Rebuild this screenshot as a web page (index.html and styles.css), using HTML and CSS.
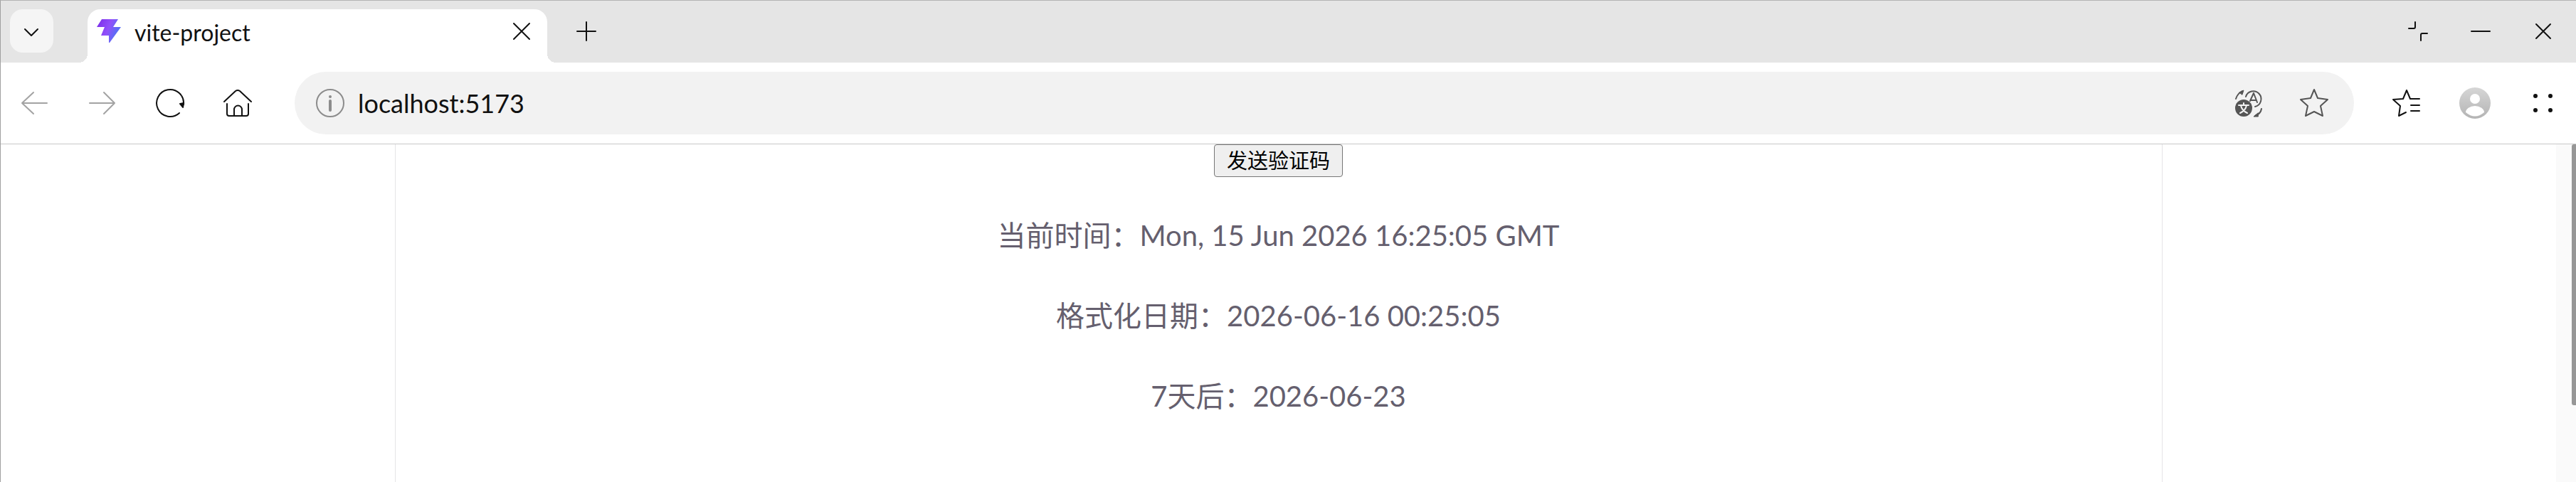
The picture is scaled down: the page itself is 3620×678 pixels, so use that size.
FILE: index.html
```
<!DOCTYPE html>
<html lang="zh-CN">
<head>
  <meta charset="utf-8">
  <title>vite-project</title>
  <link rel="stylesheet" href="styles.css">
</head>
<body>

<header class="tabs">
  <button class="tab-menu" aria-label="Tabs">
    <svg width="60" height="60" viewBox="0 0 60 60"><path d="M21 27l9 9 9-9"/></svg>
  </button>
  <div class="tab">
    <svg class="logo" width="36" height="36" viewBox="0 0 36 36">
      <defs>
        <linearGradient id="bolt" x1="0" y1="0" x2="1" y2="0.4">
          <stop offset="0" stop-color="#7a2be8"/>
          <stop offset="0.55" stop-color="#9150fa"/>
          <stop offset="0.9" stop-color="#5a6cf5"/>
        </linearGradient>
      </defs>
      <path d="M8 2H31L24 13H35L19 35H18V25H7L12 13H1Z"/>
    </svg>
    <span class="title">vite-project</span>
    <button class="icon" aria-label="Close tab">
      <svg width="28" height="28" viewBox="0 0 28 28"><path d="M3 3l22 22M25 3L3 25"/></svg>
    </button>
  </div>
  <button class="icon new-tab" aria-label="New tab">
    <svg width="30" height="30" viewBox="0 0 30 30"><path d="M15 2v26M2 15h26"/></svg>
  </button>
  <div class="window">
    <button class="icon" aria-label="Restore">
      <svg width="30" height="30" viewBox="0 0 30 30"><path d="M2 11h7q2 0 2-2V2M28 18h-7q-2 0-2 2v8"/></svg>
    </button>
    <button class="icon" aria-label="Minimize">
      <svg width="30" height="30" viewBox="0 0 30 30"><path d="M2 15h26"/></svg>
    </button>
    <button class="icon" aria-label="Close">
      <svg width="30" height="30" viewBox="0 0 30 30"><path d="M5 5l20 20M25 5L5 25"/></svg>
    </button>
  </div>
</header>

<nav class="toolbar">
  <button class="icon off" aria-label="Back">
    <svg width="42" height="42" viewBox="0 0 42 42"><path d="M38 21H3M19 6L3 21l16 15"/></svg>
  </button>
  <button class="icon off" aria-label="Forward">
    <svg width="42" height="42" viewBox="0 0 42 42"><path d="M3 21h35M23 6l15 15-15 15"/></svg>
  </button>
  <button class="icon" aria-label="Reload">
    <svg width="42" height="42" viewBox="0 0 42 42"><path d="M34 35A19 19 0 1 1 40 23"/><path d="M35 22l4 5 1-6z" fill="#111"/></svg>
  </button>
  <button class="icon" aria-label="Home">
    <svg width="42" height="42" viewBox="0 0 42 42"><path d="M2 19L18 4q3-2 6 0l16 15M6 22v14q0 3 3 3h24q3 0 3-3V22M16 39V30a5 5 0 0 1 11 0v9"/></svg>
  </button>
  <div class="address">
    <svg class="info" width="42" height="42" viewBox="0 0 42 42"><circle cx="21" cy="21" r="19"/><path d="M21 18v13" stroke-width="4"/><circle cx="21" cy="12" r="2" fill="#8c8c8c" stroke="none"/></svg>
    <input type="text" aria-label="Address" value="localhost:5173">
    <button class="icon grey" aria-label="Translate">
      <svg width="42" height="42" viewBox="0 0 42 42"><path d="M3 15Q5 8 12 4M17 12A11 11 0 1 1 30 26M39 29q-1 7-9 10"/><path d="M23 18l5-11 5 13M24 17h7"/><path d="M8 6l6-3-2 6zM34 35l-6 5 6 0z" fill="#555" stroke-width="1"/><circle cx="14" cy="28" r="12" fill="#555" stroke="none"/><path d="M7 24h14M14 21v3M9 35q8-4 9-11M19 35q-8-4-9-11" stroke="#f2f2f2"/></svg>
    </button>
    <button class="icon grey" aria-label="Favorite">
      <svg width="42" height="42" viewBox="0 0 42 42"><path d="M21 2l5 12 14 2-10 9 3 14-12-6-12 6 3-14L2 16l14-2z"/></svg>
    </button>
  </div>
  <button class="icon" aria-label="Favorites">
    <svg width="42" height="42" viewBox="0 0 42 42"><path d="M39 15H26L21 3l-5 12-14 1 10 9-2 14 10-5M27 24h12M27 32h12"/></svg>
  </button>
  <button class="icon" aria-label="Profile">
    <svg width="44" height="44" viewBox="0 0 44 44" class="avatar">
      <defs>
        <linearGradient id="grey" x1="0" y1="0" x2="0" y2="1">
          <stop offset="0" stop-color="#d6d6d6"/>
          <stop offset="1" stop-color="#b4b4b4"/>
        </linearGradient>
      </defs>
      <circle cx="22" cy="22" r="22" fill="url(#grey)"/>
      <circle cx="22" cy="16" r="7"/>
      <path d="M9 35a13 9 0 0 1 26 0q-13 11-26 0z"/>
    </svg>
  </button>
  <button class="icon" aria-label="Menu">
    <svg width="42" height="42" viewBox="0 0 42 42" class="dots"><circle cx="10" cy="11" r="3"/><circle cx="31" cy="11" r="3"/><circle cx="10" cy="31" r="3"/><circle cx="31" cy="31" r="3"/></svg>
  </button>
</nav>

<div class="viewport">
  <main class="root">
    <button class="send">发送验证码</button>
    <p>当前时间：Mon, 15 Jun 2026 16:25:05 GMT</p>
    <p>格式化日期：2026-06-16 00:25:05</p>
    <p>7天后：2026-06-23</p>
  </main>
  <div class="scrollbar"><div class="thumb"></div></div>
</div>

</body>
</html>
```

FILE: styles.css
```
* { box-sizing: border-box; }

body {
  display: flex;
  flex-direction: column;
  min-height: 100vh;
  margin: 0;
  overflow: hidden;
  color: #111;
  background: #fff;
  border-top: 1px solid #b4b4b4;
  border-left: 1px solid #a0a0a0;
  font-family: Lato, "Noto Sans CJK SC", sans-serif;
}

button {
  color: inherit;
  font: inherit;
}
svg {
  display: block;
  fill: none;
  stroke: #111;
  stroke-width: 2;
  stroke-linecap: round;
  stroke-linejoin: round;
}
.icon {
  padding: 0;
  border: 0;
  background: none;
}

.tabs {
  display: flex;
  height: 87px;
  padding-top: 12px;
  padding-right: 31px;
  background: #e5e5e5;
}
.tab-menu {
  width: 61px;
  height: 61px;
  margin-left: 13px;
  padding: 0;
  border: 0;
  border-radius: 18px;
  background: #f5f5f5;
}
.tab {
  position: relative;
  display: flex;
  align-items: flex-start;
  width: 646px;
  margin-left: 48px;
  padding: 12px 22px 0 12px;
  border-radius: 18px 18px 0 0;
  background: #fff;
}
/* flared feet of the active tab */
.tab::before,
.tab::after {
  content: "";
  position: absolute;
  bottom: 0;
  width: 12px;
  height: 12px;
}
.tab::before {
  right: 100%;
  background: radial-gradient(circle at 0 0, #e5e5e5 12px, #fff 12px);
}
.tab::after {
  left: 100%;
  background: radial-gradient(circle at 100% 0, #e5e5e5 12px, #fff 12px);
}
.logo {
  fill: url(#bolt);
  stroke: none;
}
.title {
  flex: 1;
  margin-left: 18px;
  font-size: 32px;
  line-height: 42px;
}
.tab .icon { margin-top: 5px; }
.new-tab {
  align-self: flex-start;
  margin: 16px 0 0 40px;
}
.window {
  display: flex;
  gap: 58px;
  align-items: flex-start;
  margin-left: auto;
  padding-top: 16px;
}

.toolbar {
  display: flex;
  align-items: center;
  gap: 53px;
  height: 115px;
  padding: 0 25px 0 27px;
  border-bottom: 1px solid #c8c8c8;
}
.off svg { stroke: #a3a3a3; }
.grey svg { stroke: #555; }
.address {
  display: flex;
  flex: 1;
  align-items: center;
  height: 88px;
  margin-left: 6px;
  padding: 0 35px 0 29px;
  border-radius: 44px;
  background: #f2f2f2;
}
.address .icon { margin-left: 50px; }
.info { stroke: #8c8c8c; }
.address input {
  flex: 1;
  min-width: 0;
  margin-left: 18px;
  padding: 0;
  border: 0;
  color: inherit;
  background: none;
  font: inherit;
  font-size: 36px;
}
.avatar {
  fill: #fff;
  stroke: none;
}
.dots {
  fill: #111;
  stroke: none;
}

.viewport {
  display: flex;
  flex: 1;
}
.root {
  width: 100%;
  max-width: 2484px;
  margin: 0 auto;
  border: solid #e5e4e7;
  border-width: 0 1px;
  color: #655f6e;
  font-size: 40px;
  text-align: center;
}
.root p {
  margin: 40px 0;
  line-height: 73px;
}
.send {
  display: block;
  height: 46px;
  margin: 0 auto 46px;
  padding: 0 17px;
  border: 1px solid #767676;
  border-radius: 4px;
  color: #000;
  background: #efefef;
  font-size: 29px;
  line-height: 40px;
}
.scrollbar {
  width: 28px;
  background: #fafafa;
}
.thumb {
  width: 6px;
  height: 367px;
  margin-left: auto;
  border-radius: 3px 0 0 3px;
  background: #979797;
}
```
